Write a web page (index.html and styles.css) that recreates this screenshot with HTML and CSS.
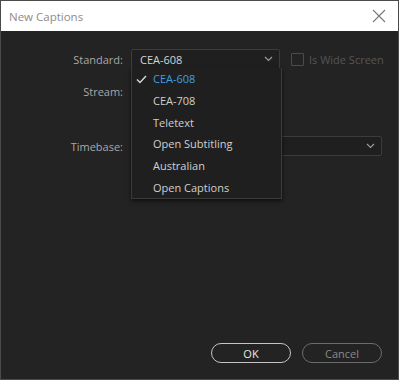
FILE: index.html
```html
<!DOCTYPE html>
<html lang="en">
  <head>
    <meta charset="UTF-8" />
    <title>New Captions</title>
    <link rel="stylesheet" href="styles.css">
  </head>
  <body>
    <div class="window">
      <div class="titlebar">
        <span class="title">New Captions</span>
        <svg class="close" width="14" height="14" viewBox="0 0 14 14">
          <path d="M1 1 L13 13 M13 1 L1 13" stroke="#777" stroke-width="1.1" fill="none" />
        </svg>
      </div>
      <div class="content">
        <div class="form">
          <div class="row">
            <label>Standard:</label>
            <div class="select standard">
              <span>CEA-608</span>
              <svg class="chev" width="9" height="6" viewBox="0 0 9 6"><path d="M1 1 L4.5 4.5 L8 1" stroke="#9a9a9a" stroke-width="1.2" fill="none" /></svg>
            </div>
            <div class="check">
              <span class="box"></span>
              <span class="check-label">Is Wide Screen</span>
            </div>
          </div>
          <div class="row stream">
            <label>Stream:</label>
          </div>
          <div class="row timebase">
            <label>Timebase:</label>
            <div class="select wide">
              <span></span>
              <svg class="chev" width="9" height="6" viewBox="0 0 9 6"><path d="M1 1 L4.5 4.5 L8 1" stroke="#9a9a9a" stroke-width="1.2" fill="none" /></svg>
            </div>
          </div>
        </div>
        <div class="buttons">
          <button class="btn ok">OK</button>
          <button class="btn cancel">Cancel</button>
        </div>
        <ul class="menu">
          <li class="selected">
            <svg class="tick" width="11" height="9" viewBox="0 0 11 9"><path d="M1 4.5 L4 7.5 L10 1" stroke="#d8d8d8" stroke-width="1.4" fill="none" /></svg>
            CEA-608
          </li>
          <li>CEA-708</li>
          <li>Teletext</li>
          <li>Open Subtitling</li>
          <li>Australian</li>
          <li>Open Captions</li>
        </ul>
      </div>
    </div>
  </body>
</html>
```

FILE: styles.css
```css
body {
  margin: 0;
  font-family: "Open Sans", "Noto Sans", sans-serif;
  background: #232323;
}
.window {
  width: 399px;
  height: 380px;
  box-sizing: border-box;
  border: 1px solid #4a4a4a;
  display: flex;
  flex-direction: column;
  background: #232323;
}
.titlebar {
  height: 30px;
  background: #ffffff;
  display: flex;
  align-items: center;
  justify-content: space-between;
  padding: 0 11px 0 8px;
}
.title {
  font-size: 11.5px;
  color: #8c8c8c;
}
.close {
  margin-right: 1px;
}
.content {
  flex: 1;
  position: relative;
  display: flex;
  flex-direction: column;
  justify-content: space-between;
  padding: 18px 16px 16px 0;
}
.row {
  display: flex;
  align-items: center;
  height: 20px;
  font-size: 11px;
}
.row label {
  flex-shrink: 0;
  width: 122px;
  text-align: right;
  color: #a8a8a8;
  margin-right: 8px;
}
.stream {
  margin-top: 12px;
}
.timebase {
  margin-top: 35px;
}
.select {
  flex-shrink: 0;
  height: 20px;
  box-sizing: border-box;
  border: 1px solid #3c3c3c;
  border-radius: 2px;
  background: #1f1f1f;
  display: flex;
  align-items: center;
  justify-content: space-between;
  padding: 0 6px 0 8px;
  color: #d4d4d4;
}
.standard {
  width: 149px;
}
.wide {
  flex: 1;
}
.check {
  display: flex;
  align-items: center;
  margin-left: 11px;
  color: #555555;
  white-space: nowrap;
}
.box {
  width: 11px;
  height: 11px;
  border: 1px solid #4c4c4c;
  border-radius: 1px;
  margin-right: 5px;
}
.buttons {
  display: flex;
  justify-content: flex-end;
  gap: 11px;
}
.btn {
  width: 80px;
  height: 20px;
  border-radius: 10px;
  background: transparent;
  font-family: inherit;
  font-size: 11px;
  padding: 0;
}
.ok {
  border: 1px solid #c4c4c4;
  color: #e8e8e8;
}
.cancel {
  border: 1px solid #6c6c6c;
  color: #8a8a8a;
}
.menu {
  position: absolute;
  left: 130px;
  top: 37px;
  width: 149px;
  margin: 0;
  padding: 0;
  list-style: none;
  background: #1f1f1f;
  border: 1px solid #3a3a3a;
  border-top: none;
  box-shadow: 0 2px 4px rgba(0, 0, 0, 0.6);
  font-size: 11px;
  color: #d0d0d0;
}
.menu li {
  height: 21.7px;
  display: flex;
  align-items: center;
  padding-left: 21px;
  position: relative;
}
.menu .selected {
  color: #3f9ee0;
}
.tick {
  position: absolute;
  left: 4px;
  top: 7px;
}
```
